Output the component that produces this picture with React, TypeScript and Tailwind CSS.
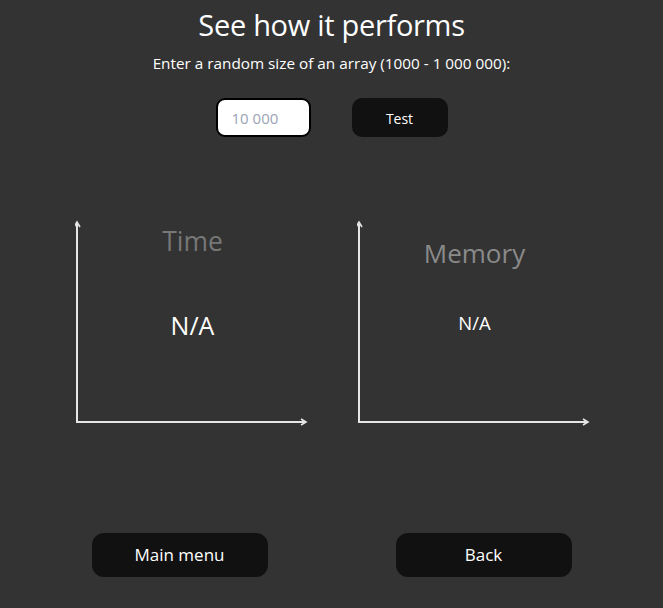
import React from 'react';

function Chart({ title, value, titleClass, valueClass }: { title: string; value: string; titleClass: string; valueClass: string }) {
  return (
    <div className="relative w-[233px] h-[206px]">
      {/* axes */}
      <svg className="absolute inset-0" width="233" height="206" viewBox="0 0 233 206" fill="none">
        <path d="M2 4 V202 H230" stroke="#e6e6e6" strokeWidth="2" />
        <path d="M-1 7 L2 2 L5 7" stroke="#e6e6e6" strokeWidth="1.6" />
        <path d="M226 199 L231 202 L226 205" stroke="#e6e6e6" strokeWidth="1.6" />
      </svg>
      <div className="relative flex flex-col items-center pl-[2px]">
        <div className={titleClass}>{title}</div>
        <div className={valueClass}>{value}</div>
      </div>
    </div>
  );
}

export default function App() {
  return (
    <div
      className="w-[663px] h-[608px] bg-[#333333] text-white flex flex-col items-center"
      style={{ fontFamily: '"Open Sans", "Noto Sans", sans-serif' }}
    >
      <h1 className="mt-[6px] text-[29px] leading-[38px] tracking-[-0.3px]">See how it performs</h1>
      <p className="mt-[9px] text-[15.3px] leading-[20px]">Enter a random size of an array (1000 - 1 000 000):</p>

      <div className="mt-[25px] flex items-center gap-[41px]">
        <input
          placeholder="10 000"
          className="w-[95px] h-[39px] rounded-[9px] border-2 border-black bg-white px-[14px] pt-[1px] text-[15px] text-black placeholder:text-[#9aa3b5] outline-none"
        />
        <button className="w-[96px] h-[39px] rounded-[10px] bg-[#111111] pt-[1px] text-[14px] text-white">Test</button>
      </div>

      <div className="mt-[83px] flex gap-[49px] pl-[2px]">
        <Chart
          title="Time"
          value="N/A"
          titleClass="mt-[4px] text-[26.5px] leading-[34px] text-[#777777]"
          valueClass="mt-[51px] text-[25px] leading-[32px]"
        />
        <Chart
          title="Memory"
          value="N/A"
          titleClass="mt-[16px] text-[26px] leading-[34px] text-[#8a8a8a]"
          valueClass="mt-[41px] text-[18.5px] leading-[24px]"
        />
      </div>

      <div className="mt-[107px] flex gap-[128px]">
        <button className="w-[176px] h-[44px] rounded-[12px] bg-[#111111] text-[17px]">Main menu</button>
        <button className="w-[176px] h-[44px] rounded-[12px] bg-[#111111] text-[17px]">Back</button>
      </div>
    </div>
  );
}
